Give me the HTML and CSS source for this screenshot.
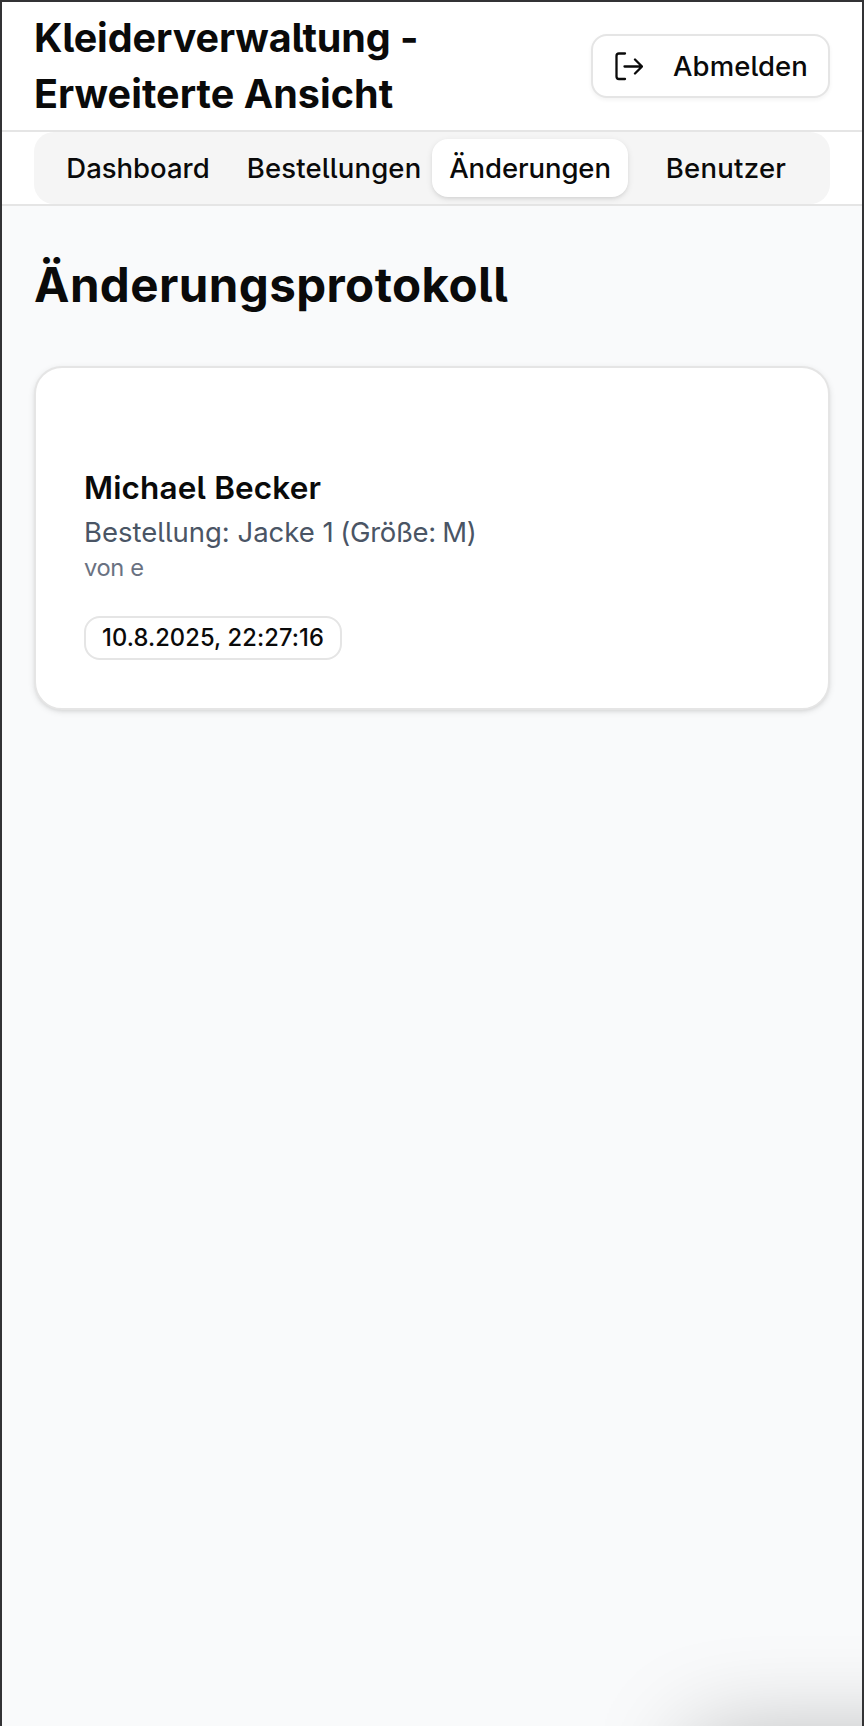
FILE: index.html
```html
<!DOCTYPE html>
<html lang="de">
<head>
<meta charset="utf-8">
<title>Kleiderverwaltung</title>
<link rel="stylesheet" href="styles.css">
</head>
<body>
<div class="app">
  <header class="header">
    <div class="title"><span class="title-first">Kleiderverwaltung -</span><br><span class="title-second">Erweiterte Ansicht</span></div>
    <button class="logout">
      <svg class="logout-icon" width="32" height="32" viewBox="0 0 32 32" fill="none" stroke="currentColor" stroke-width="2.3" stroke-linecap="round" stroke-linejoin="round"><path d="M14 3.5H8a2.5 2.5 0 0 0-2.5 2.5v20.5A2.5 2.5 0 0 0 8 29H14M13.5 16.5H31M24 9.5l7 7-7 7"/></svg>
      <span class="logout-label">Abmelden</span>
    </button>
  </header>
  <div class="nav">
    <nav class="tabs">
      <a class="tab dashboard"><span>Dashboard</span></a>
      <a class="tab orders"><span>Bestellungen</span></a>
      <a class="tab changes active"><span>Änderungen</span></a>
      <a class="tab users"><span>Benutzer</span></a>
    </nav>
  </div>
  <main class="main">
    <h1 class="heading"><span>Änderungsprotokoll</span></h1>
    <article class="card">
      <h2 class="name"><span>Michael Becker</span></h2>
      <p class="order">Bestellung: Jacke 1<span class="size"> (Größe: M)</span></p>
      <p class="author"><span>von e</span></p>
      <time class="badge"><span>10.8.2025, 22:27:16</span></time>
    </article>
  </main>
  <div class="glow"></div>
</div>
</body>
</html>
```
FILE: styles.css
```css
* { box-sizing: border-box; margin: 0; }
body { font-family: Inter, "Liberation Sans", sans-serif; font-feature-settings: "cv05"; color: #0a0a0a; }
.app { position: relative; height: 1726px; overflow: hidden; border: 2px solid #333335; border-bottom: 0; background: #f9fafb; }
.header { display: flex; justify-content: space-between; align-items: center; height: 130px; padding: 0 32px; background: #fff; border-bottom: 2px solid #e5e5e5; }
.title { font-size: 39.5px; line-height: 56px; font-weight: 650; white-space: nowrap; padding-bottom: 1px; }
.title-first { letter-spacing: -0.08px; }
.title-second { letter-spacing: 0.05px; }
.logout { display: flex; align-items: center; justify-content: space-between; width: 239px; height: 64px; padding: 0 20px 0 18px; border: 2px solid #e5e5e5; border-radius: 16px; background: #fff; box-shadow: 0 2px 4px rgb(0 0 0 / 5%); color: inherit; font: 500 27.5px Inter, sans-serif; font-feature-settings: inherit; letter-spacing: 0.1px; white-space: nowrap; }
.nav { height: 74px; padding: 0 32px; background: #fff; border-bottom: 2px solid #e5e5e5; }
.tabs { display: grid; grid-template-columns: repeat(4, 1fr); height: 72px; padding: 7px 6px; border-radius: 20px; background: #f5f5f5; }
.tab { display: flex; align-items: center; justify-content: center; height: 58px; border-radius: 16px; font-size: 27.5px; font-weight: 500; white-space: nowrap; }
.orders { letter-spacing: 0.15px; }
.changes { letter-spacing: -0.1px; }
.users { letter-spacing: 0.25px; }
.active { background: #fff; box-shadow: 0 2px 6px rgb(0 0 0 / 10%), 0 2px 4px -2px rgb(0 0 0 / 10%); }
.main { padding: 47px 32px 0; }
.heading { height: 64px; font-size: 47.5px; line-height: 64px; font-weight: 750; letter-spacing: 0.42px; white-space: nowrap; }
.card { height: 344px; margin-top: 49px; padding: 96px 48px 0 48px; border: 2px solid #e5e5e5; border-radius: 28px; background: #fff; box-shadow: 0 2px 6px rgb(0 0 0 / 10%), 0 2px 4px -2px rgb(0 0 0 / 10%); white-space: nowrap; }
.name { font-size: 31.5px; line-height: 48px; font-weight: 640; letter-spacing: 0.15px; }
.order { font-size: 27.5px; line-height: 40px; color: #4a5565; }
.size { letter-spacing: -0.35px; word-spacing: -0.8px; }
.author { font-size: 23.7px; line-height: 32px; letter-spacing: -0.35px; color: #6a7282; }
.badge { display: flex; align-items: center; justify-content: center; width: 258px; height: 44px; margin-top: 32px; padding-bottom: 2px; border: 2px solid #e5e5e5; border-radius: 16px; font-size: 23.7px; font-weight: 500; letter-spacing: 0.1px; }
/* soft shade rising from below the lower right corner */
.glow { position: absolute; left: 690px; top: 1734px; width: 360px; height: 200px; box-shadow: 0 0 96px rgb(0 0 0 / 27%); }
```
